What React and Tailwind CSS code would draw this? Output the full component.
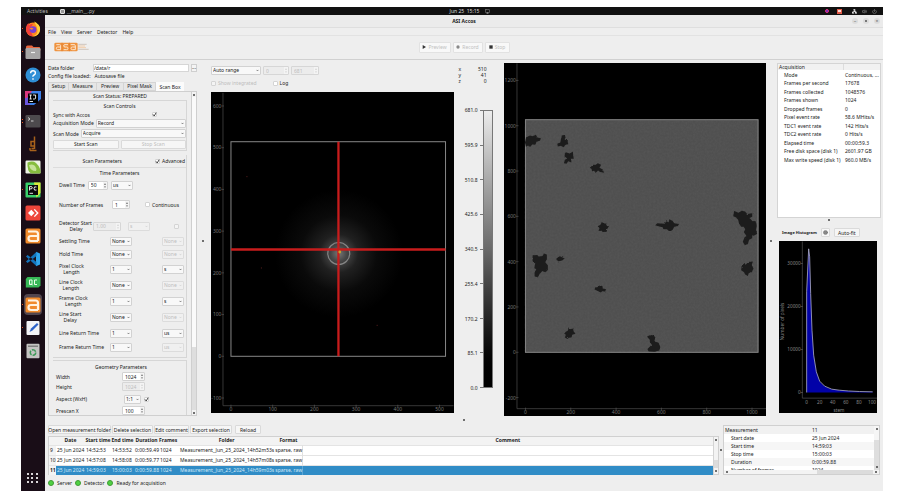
import { ChevronDown, Circle, Monitor, Network, Power, Volume2 } from "lucide-react";

const PIXEL_ROWS = [
  { label: ["Settling Time"], value: "None", unit: "None", off: true, h: "h-3" },
  { label: ["Hold Time"], value: "None", unit: "None", off: true, h: "h-[14px]" },
  { label: ["Pixel Clock", "Length"], value: "1", unit: "s", h: "h-4" },
  { label: ["Line Clock", "Length"], value: "None", unit: "None", off: true, h: "h-4" },
  { label: ["Frame Clock", "Length"], value: "1", unit: "s", h: "h-4" },
  { label: ["Line Start", "Delay"], value: "None", unit: "None", off: true, h: "h-4" },
  { label: ["Line Return Time"], value: "1", unit: "us", h: "h-4" },
  { label: ["Frame Return Time"], value: "1", unit: "us", off: true, h: "h-3" },
];

const ACQUISITION = [
  ["Mode", "Continuous, ..."],
  ["Frames per second", "17678"],
  ["Frames collected", "1048576"],
  ["Frames shown", "1024"],
  ["Dropped frames", "0"],
  ["Pixel event rate", "58.6 MHits/s"],
  ["TDC1 event rate", "142 Hits/s"],
  ["TDC2 event rate", "0 Hits/s"],
  ["Elapsed time", "00:00:59.3"],
  ["Free disk space (disk 1)", "2601.97 GB"],
  ["Max write speed (disk 1)", "960.0 MB/s"],
];

const MEASUREMENT = [
  ["Start date", "25 Jun 2024"],
  ["Start time", "14:59:03"],
  ["Stop time", "15:00:03"],
  ["Duration", "0:00:59.88"],
  ["Number of frames", "1024"],
];

const RUNS = [
  ["9", "25 Jun 2024", "14:52:53", "14:53:52", "0:00:59.49", "1024", "Measurement_Jun_25_2024_14h52m53s", "sparse, raw"],
  ["10", "25 Jun 2024", "14:57:08", "14:58:08", "0:00:59.77", "1024", "Measurement_Jun_25_2024_14h57m08s", "sparse, raw"],
  ["11", "25 Jun 2024", "14:59:03", "15:00:03", "0:00:59.88", "1024", "Measurement_Jun_25_2024_14h59m03s", "sparse, raw"],
];

function Select({ label, value, off, className = "" }) {
  return (
    <span className={`relative block h-[9px] shrink-0 ${className}`}>
      <select
        aria-label={label}
        disabled={off}
        className="block h-full w-full appearance-none rounded-[1px] border border-[#d2d2d2] bg-[#f8f8f8] pl-[1px] leading-[7px] text-[#222] disabled:border-[#dcdcdc] disabled:bg-[#f0f0f0] disabled:text-[#bdbdbd] disabled:opacity-100"
      >
        <option>{value}</option>
      </select>
      <ChevronDown className={`pointer-events-none absolute top-[3px] right-[2px] h-[3px] w-[3px] ${off ? "text-[#ccc]" : "text-[#444]"}`} strokeWidth={5} />
    </span>
  );
}

function Spin({ label, value, off, className = "" }) {
  return (
    <span className={`flex h-[9px] shrink-0 rounded-[1px] border ${off ? "border-[#d6d6d6] bg-[#ececec]" : "border-[#d2d2d2] bg-white"} ${className}`}>
      <input
        aria-label={label}
        disabled={off}
        defaultValue={value}
        className="h-full w-full min-w-0 bg-transparent pl-[2px] leading-[7px] text-[#222] disabled:text-[#bdbdbd]"
      />
      <svg viewBox="0 0 4 8" className={`h-full w-1 shrink-0 bg-[#f4f4f4] ${off ? "fill-[#ccc]" : "fill-[#555]"}`}>
        <path d="M.8 3 2 1.300 3.200 3zM.8 5 2 6.700 3.200 5z" />
      </svg>
    </span>
  );
}

function Check({ label, checked, off, hideLabel }) {
  return (
    <label className={`flex items-center gap-[2px] ${off ? "text-[#bdbdbd]" : ""}`}>
      <span className="relative block h-[5px] w-[5px]">
        <input
          type="checkbox"
          aria-label={label}
          defaultChecked={checked}
          disabled={off}
          className="block h-[5px] w-[5px] appearance-none rounded-[1px] border border-[#d4d4d4] bg-white disabled:bg-[#f4f4f4]"
        />
        {checked && (
          <svg viewBox="0 0 5 5" className="pointer-events-none absolute inset-0 h-[5px] w-[5px]">
            <path d="M1 2.400 2.200 4 4.200.6" fill="none" stroke="#333" strokeWidth=".9" />
          </svg>
        )}
      </span>
      {!hideLabel && label}
    </label>
  );
}

function Button({ children, disabled, className = "" }) {
  return (
    <button
      type="button"
      disabled={disabled}
      className={`flex h-[9px] items-center justify-center whitespace-nowrap rounded-[1px] border border-[#dadada] bg-[#f6f6f6] disabled:text-[#bdbdbd] ${className}`}
    >
      {children}
    </button>
  );
}

function Handle({ className = "" }) {
  return <span className={`block h-[2px] w-[2px] shrink-0 rounded-full bg-[#444] ${className}`} />;
}

/* ---------- dock ---------- */

function LetterA() {
  return (
    <>
      <rect x=".5" y=".5" width="15" height="15" rx="1.500" fill="#f08a2c" />
      <path d="M3 3.500h7.500q2.500 0 2.500 2.500v7M13 8H6Q3.500 8 3.500 10.500T6 13h7" fill="none" stroke="#fff3e2" strokeWidth="2.200" />
    </>
  );
}

const DOCK = [
  {
    name: "Firefox",
    dots: 1,
    art: (
      <>
        <circle cx="8" cy="8.500" r="7" fill="#ff8a1f" />
        <path d="M1 7Q1 4 3.500 2l.5 2.200Q6 2.500 8 3L5 8l3 7.500Q1.500 15 1 8z" fill="#f4403b" />
        <path d="M9 .5q4.500 2 5.800 5.500 1 4-1.500 7-2.500 2.500-5.300 2.500 5-2 4.500-6.500Q12 5 9 .5z" fill="#ffd23c" />
        <circle cx="8" cy="8.600" r="3.400" fill="#7a3fd0" />
        <path d="M4.500 7.500q2-1.500 4 .2l-2 1z" fill="#ff8a1f" />
      </>
    ),
  },
  {
    name: "Files",
    dots: 1,
    art: (
      <>
        <path d="M1 3q0-1.500 1.500-1.500H7L8.500 3H14q1.200 0 1.200 1.200V7H1z" fill="#e9663f" />
        <rect x=".5" y="4" width="15" height="11" rx="1.200" fill="#a7a5a6" />
        <path d="M6 8.500h4" stroke="#efefef" strokeWidth="1.200" />
      </>
    ),
  },
  {
    name: "Help",
    art: (
      <>
        <circle cx="8" cy="8" r="7.500" fill="#2f8fd6" />
        <path d="M5.600 6.200Q5.700 3.800 8 3.800t2.400 2.100Q10.400 7.300 9 8t-1 1.800M8 11.200v1.600" fill="none" stroke="#fff" strokeWidth="1.400" />
      </>
    ),
  },
  {
    name: "IntelliJ IDEA",
    art: (
      <>
        <path d="M0 1h8L3 15H0z" fill="#d9377e" />
        <path d="M7 1h9v8L9 15H0v-4z" fill="#3b7fe8" />
        <path d="M0 8h5v7H0z" fill="#6b56dd" />
        <rect x="3" y="3.500" width="10" height="9.500" fill="#000" />
        <path d="M4.500 5h2.200M5.600 5v4M4.500 9h2.200M8 5h2.600v3q0 1-1.200 1H8M4.500 11.500H8" fill="none" stroke="#fff" strokeWidth=".9" />
      </>
    ),
  },
  {
    name: "Terminal",
    dots: 2,
    art: (
      <>
        <rect x=".5" y="2" width="15" height="12.500" rx="1.300" fill="#4d4a4d" />
        <path d="M3 4.500 5 6 3 7.500M6 8h2.500" fill="none" stroke="#ddd" strokeWidth=".9" />
      </>
    ),
  },
  {
    name: "Microscope",
    art: (
      <path d="M9.500.5V13M9.500 5.500H6v4.500h3.500M5 14.500h6.500M5 12v2.500M6.500 12.500H9" fill="none" stroke="#a8621c" strokeWidth="1.500" />
    ),
  },
  {
    name: "Settings",
    art: (
      <>
        <rect x=".5" y="1.500" width="15" height="13" rx="1.200" fill="#eef3e6" />
        <path d="M2.500 3.500Q8 1.500 11 4t4.500 7v3.500H6Q2 12 2.500 3.500z" fill="#86bd3f" />
        <path d="M4 6q4-1.500 6 1t1 5q-6 0-7-6z" fill="#c7e39a" />
      </>
    ),
  },
  {
    name: "PyCharm",
    dots: 1,
    art: (
      <>
        <rect x=".5" y=".5" width="15" height="15" rx="1" fill="#39cf6b" />
        <path d="M9 .5h6.500V11l-4 4.500z" fill="#d9ea3b" />
        <rect x="3" y="3" width="10" height="10" fill="#0b0b0b" />
        <path d="M4.500 8.500V4.600H6q1.300 0 1.300 1.100T6 6.900H4.500M11.500 5q-2.500-1-2.500 1.500t2.500 1.500M4.500 11.300H8" fill="none" stroke="#fff" strokeWidth=".9" />
      </>
    ),
  },
  {
    name: "AnyDesk",
    art: (
      <>
        <rect x=".5" y=".5" width="15" height="15" rx="1.500" fill="#ee463b" />
        <path d="M6.300 4.800 9.500 8l-3.200 3.200L3 8z" fill="#fff" />
        <path d="m8.800 4.800 1-.8L13.700 8l-3.900 4-1-.8L11.800 8z" fill="#fff" />
      </>
    ),
  },
  { name: "Accos", art: <LetterA /> },
  {
    name: "Visual Studio Code",
    art: (
      <>
        <path d="M11 .8 15 2.600v10.800L11 15.200z" fill="#2ea3ea" />
        <path d="M11.300 1 1 10.500l1.600 1.500L11.500 5M11.300 15 1 5.500 2.600 4l8.900 7" fill="#1374bd" />
      </>
    ),
  },
  {
    name: "Qt Creator",
    art: (
      <>
        <path d="M2.500 3h13v8.500l-2 2H.8V5z" fill="#37b857" />
        <path d="M7 6H4.500v4.500H7V6M6 9.500l1.500 1.800M12 6H9.500v4.500H12" fill="none" stroke="#e7ffe9" strokeWidth="1" />
      </>
    ),
  },
  { name: "Accos session", dots: 1, active: true, art: <LetterA /> },
  {
    name: "Text Editor",
    dots: 1,
    art: (
      <>
        <rect x="1.500" y="1" width="13" height="14" rx="1" fill="#f2f3f6" />
        <path d="M4.500 12 6 8.500l6-5.500 1.500 1.500-6 6z" fill="#2c62c8" />
      </>
    ),
  },
  {
    name: "Trash",
    art: (
      <>
        <rect x="1.500" y=".8" width="13" height="14.500" rx="1" fill="#c4c3c2" />
        <path d="M3 3.200h10" stroke="#6f6f6f" strokeWidth="1.200" />
        <circle cx="8" cy="9.500" r="2.700" fill="none" stroke="#3b9a57" strokeWidth="1.500" strokeDasharray="4.500 1.150" />
      </>
    ),
  },
];

function Dock() {
  return (
    <nav className="flex w-6 shrink-0 flex-col bg-[#190d17] pt-[2px]">
      {DOCK.map((app) => (
        <button key={app.name} type="button" aria-label={app.name} className="flex h-[23px] w-full items-center">
          <span className="flex w-[3px] flex-col items-center gap-[2px]">
            {Array.from({ length: app.dots || 0 }, (_, i) => (
              <span key={i} className="h-[1px] w-[1px] bg-[#e95420]" />
            ))}
          </span>
          <span className={`flex h-[21px] w-[18px] items-center justify-center rounded-sm ${app.active ? "bg-[#52464f]" : ""}`}>
            <svg viewBox="0 0 16 16" className="h-4 w-4">{app.art}</svg>
          </span>
        </button>
      ))}
      <button type="button" aria-label="Show applications" className="mt-auto mb-2 ml-[6px] grid w-[11px] grid-cols-3 gap-[2px]">
        {Array.from({ length: 9 }, (_, i) => (
          <span key={i} className="h-[2px] w-[2px] bg-[#d8d4d7]" />
        ))}
      </button>
    </nav>
  );
}

/* ---------- left panel ---------- */

function ParamLabel({ lines }) {
  return (
    <span className="w-[51px] shrink-0">
      <span className="inline-block text-center leading-[6px]">
        {lines.map((line) => (
          <span key={line} className="block whitespace-nowrap">{line}</span>
        ))}
      </span>
    </span>
  );
}

function ScanBox() {
  return (
    <div className="flex min-h-0 flex-1 border border-[#cfcfcf]">
      <div className="flex min-w-0 flex-1 flex-col overflow-hidden pr-1 pl-1">
        <p className="h-2 shrink-0 text-center leading-[8px]">Scan Status: PREPARED</p>

        <section className="shrink-0 border-t border-r border-b border-[#d6d6d6] pt-[1px] pb-[1px]">
          <h2 className="h-[9px] text-center leading-[9px]">Scan Controls</h2>
          <div className="flex h-[7px] items-center">
            <span className="w-[99px]">Sync with Accos</span>
            <Check label="Sync with Accos" checked hideLabel />
          </div>
          <div className="flex h-[10px] items-center gap-[2px]">
            <span>Acquisition Mode</span>
            <Select label="Acquisition Mode" value="Record" className="min-w-0 flex-auto" />
          </div>
          <div className="flex h-[11px] items-center gap-[2px]">
            <span>Scan Mode</span>
            <Select label="Scan Mode" value="Acquire" className="min-w-0 flex-auto" />
          </div>
          <div className="flex h-[10px] items-center gap-[2px]">
            <Button className="flex-1">Start Scan</Button>
            <Button className="flex-1" disabled>Stop Scan</Button>
          </div>
        </section>

        <section className="mt-1 shrink-0 border-r border-b border-[#d6d6d6] pb-1">
          <div className="flex h-3 items-center justify-end gap-[33px] pr-[1px]">
            <h2>Scan Parameters</h2>
            <Check label="Advanced" checked />
          </div>
          <div className="border-t border-[#dcdcdc] pl-[6px]">
            <h3 className="h-[10px] pr-[6px] text-center leading-[10px]">Time Parameters</h3>
            <div className="flex h-[14px] items-center gap-[3px]">
              <span>Dwell Time</span>
              <Spin label="Dwell Time" value="50" className="w-5" />
              <Select label="Dwell Time unit" value="us" className="w-[22px]" />
            </div>
            <div className="flex h-[25px] items-center">
              <span className="w-[53px] shrink-0">Number of Frames</span>
              <Spin label="Number of Frames" value="1" className="mr-[15px] w-[18px]" />
              <Check label="Continuous" />
            </div>
            <div className="flex h-[18px] items-center">
              <span className="w-[34px] shrink-0 whitespace-nowrap leading-[6px]">
                Detector Start
                <span className="block text-center">Delay</span>
              </span>
              <Spin label="Detector Start Delay" value="1.00" off className="mr-[7px] w-7" />
              <Select label="Detector Start Delay unit" value="s" off className="mr-6 w-[22px]" />
              <Check label="Enable detector start delay" hideLabel off />
            </div>
            {PIXEL_ROWS.map((row) => (
              <div key={row.label[0]} className={`flex items-center pr-[2px] ${row.h}`}>
                <ParamLabel lines={row.label} />
                <Select label={row.label.join(" ")} value={row.value} className="w-[22px]" />
                <Select label={`${row.label.join(" ")} unit`} value={row.unit} off={row.off} className="ml-auto w-[22px]" />
              </div>
            ))}
          </div>
        </section>

        <section className="mt-[2px] shrink-0 border-t border-r border-[#d6d6d6] pt-[1px] pl-[3px]">
          <h2 className="h-[10px] text-center leading-[10px]">Geometry Parameters</h2>
          <div className="flex h-[9px] items-center">
            <span className="w-[66px]">Width</span>
            <Spin label="Width" value="1024" className="w-[23px]" />
          </div>
          <div className="flex h-[11px] items-center">
            <span className="w-[66px]">Height</span>
            <Spin label="Height" value="1024" off className="w-[23px]" />
          </div>
          <div className="flex h-[14px] items-center">
            <span className="w-[68px]">Aspect (WxH)</span>
            <Select label="Aspect (WxH)" value="1:1" className="mr-[3px] w-[17px]" />
            <Check label="Lock aspect" checked hideLabel />
          </div>
          <div className="flex h-[9px] items-center">
            <span className="w-[66px]">Prescan X</span>
            <Spin label="Prescan X" value="100" className="w-[23px]" />
          </div>
        </section>
      </div>
      <div className="flex w-[5px] flex-col items-center border-l border-[#cfcfcf] bg-[#dedede]">
        <span className="flex h-[5px] w-full items-center justify-center bg-[#f3f3f3]"><Handle className="h-[1px] w-[1px]" /></span>
        <span className="h-[250px] w-full bg-[#fafafa]" />
        <span className="mt-auto flex h-[5px] w-full items-center justify-center bg-[#f3f3f3]"><Handle className="h-[1px] w-[1px]" /></span>
      </div>
    </div>
  );
}

function LeftPanel() {
  return (
    <div className="flex min-h-0 w-[149px] shrink-0 flex-col pb-[3px]">
      <label className="flex h-[9px] items-center">
        <span className="w-[45px] shrink-0">Data folder</span>
        <input defaultValue="/data/r" className="h-2 min-w-0 flex-1 border border-[#d6d6d6] bg-white leading-[6px]" />
        <button type="button" className="ml-[2px] h-2 w-[6px] border border-[#cfcfcf] bg-[#f4f4f4] leading-[5px]">...</button>
      </label>
      <p className="h-2 leading-[9px]">
        Config file loaded:<span className="ml-1">Autosave file</span>
      </p>
      <div role="tablist" className="mt-[2px] flex h-[9px]">
        <button type="button" role="tab" className="w-[21px] border border-[#d4d4d4] bg-[#e6e6e6] leading-[7px]">Setup</button>
        <button type="button" role="tab" className="w-7 border border-l-0 border-[#d4d4d4] bg-[#e6e6e6] leading-[7px]">Measure</button>
        <button type="button" role="tab" className="w-[27px] border border-l-0 border-[#d4d4d4] bg-[#e6e6e6] leading-[7px]">Preview</button>
        <button type="button" role="tab" className="w-8 border border-l-0 border-[#d4d4d4] bg-[#e6e6e6] leading-[7px]">Pixel Mask</button>
        <button type="button" role="tab" aria-selected="true" className="w-7 bg-[#fbfbfb] leading-[8px]">Scan Box</button>
      </div>
      <ScanBox />
    </div>
  );
}

/* ---------- plots ---------- */

function DiffractionPlot() {
  const yTicks = [600, 500, 400, 300, 200, 100, 0, -100];
  const xTicks = [0, 100, 200, 300, 400, 500];
  return (
    <svg viewBox="0 0 243 320" className="min-h-0 w-full flex-1 bg-black text-[5px]">
      <defs>
        <radialGradient id="glow">
          <stop offset="0" stopColor="#777" />
          <stop offset=".12" stopColor="#484848" />
          <stop offset=".3" stopColor="#202020" />
          <stop offset=".6" stopColor="#0a0a0a" />
          <stop offset="1" stopColor="#000" />
        </radialGradient>
      </defs>
      <circle cx="128" cy="161" r="64" fill="url(#glow)" />
      <path d="M12 0v313.500H243" fill="none" stroke="#444" strokeWidth=".8" />
      <g fill="#777" stroke="none">
        {yTicks.map((t) => (
          <text key={t} x="10.500" y={265.8 - t * 0.418} textAnchor="end">{t}</text>
        ))}
        {xTicks.map((t) => (
          <text key={t} x={20 + t * 0.418} y="318.500" textAnchor="middle">{t}</text>
        ))}
      </g>
      <g stroke="#555" strokeWidth=".7">
        {yTicks.map((t) => (
          <path key={t} d={`M10.500 ${264 - t * 0.418}h2.500`} />
        ))}
        {xTicks.map((t) => (
          <path key={t} d={`M${20 + t * 0.418} 312.500v2.500`} />
        ))}
      </g>
      <rect x="20" y="49" width="215" height="215" fill="none" stroke="#888" />
      <circle cx="128" cy="161" r="11" fill="none" stroke="#858585" strokeWidth="1.200" />
      <path d="M127.700 49v215M20 157h215" stroke="#c81c1c" strokeWidth="2.300" />
      <circle cx="129" cy="159.500" r="1.400" fill="#c9a227" />
      <path d="M35.500 84h1M50 175.500h1M166 233h1" stroke="#5a2020" />
    </svg>
  );
}

/* dark particles, drawn on a grid three times finer than the plot */
const PARTICLES = [
  "M104 172l12-6 8 2 10-4 4 8 11 2-3 8-10 3-4 9-9-1-6 7-8-3-5 3-3-12z",
  "M212 166l9-2 2 8-3 6 9 2 2 12-8 2-6 7-8-4-9 2-2-8 9-4z",
  "M224 216l12 4 9-6 1 12 2 10-9 0 2 11-10-4-5 8-8-2 3-10 7-4-8-6 1-9z",
  "M306 254l8 0 6-5 10 5-5 9 9 4 5 11-12-2-6-5-8 7-4-6-6 1-2-7-5-3z",
  "M332 426l6 4 8 1 1 7 7 1-6 8-1 8-12 1-4-4-9 1 3-8-5-6 8-5z",
  "M499 430l22 1 5-7 7 3 2-9 9 4 6 8 14 2-3 6-11 2-5 9-9 6-8-7-11 0-2-6-16-4-6-2z",
  "M730 393l13 5 10-6 10 2 6 8 15-2 0 10-8 4 9 10 9-1 4 14-3 12 4 12-10 6-5-1 0 9-9 4-4 13-9 4-6-11 5-13 6-4-8-11 4-9-4-8-8 0-6-9-3-11-7-8-8-3z",
  "M124 526l14-1 4 5 12-2 4-7 9 3 0 14-5 9 8 9 0 14-8 7-9-4-8 9-5 10-10-2 0-12 5-10-6-3 3-16-8-6z",
  "M196 535l10-6 8 4 6 3-7 6-11 2-6-4z",
  "M312 623l11-2 3-5 8 3 1 7 10 2-3 7-9-1-4 4-12-6-7-3z",
  "M232 742l5 6 9-2 1 8 6 8-10 3-2 8-8 1-5 4-7-5 3-8-5-4 6-6 5-2z",
  "M468 771q8-8 20-4l6 8-4 7 4 5 8 1 6 13-3 11-14 4-18-1-4-7 9-9 5-3-6-8-1-8z",
  "M755 552l10 2 7-8 14-1-3 10 5 11-5 11-9 2-3 9-8-4-4-8-8-5 1-11z",
];

function MicrographPlot() {
  const yTicks = [1200, 1000, 800, 600, 400, 200, 0, -200];
  const xTicks = [0, 200, 400, 600, 800, 1000];
  return (
    <svg viewBox="0 0 263 353" className="h-full w-full bg-black text-[5px]">
      <defs>
        <filter id="rough" x="-20%" y="-20%" width="140%" height="140%">
          <feTurbulence type="fractalNoise" baseFrequency=".12" numOctaves="2" seed="4" />
          <feDisplacementMap in="SourceGraphic" scale="6" xChannelSelector="R" yChannelSelector="G" />
          <feGaussianBlur stdDeviation="1.500" />
        </filter>
        <filter id="grain" x="0" y="0" width="100%" height="100%">
          <feTurbulence type="fractalNoise" baseFrequency=".5" numOctaves="2" seed="8" />
          <feColorMatrix values="0 0 0 0 .5  0 0 0 0 .5  0 0 0 0 .5  .5 0 0 0 -.12" />
        </filter>
      </defs>
      <path d="M13 0v346H263" fill="none" stroke="#444" strokeWidth=".8" />
      <g fill="#777">
        {yTicks.map((t) => (
          <text key={t} x="12" y={291.5 - t * 0.227} textAnchor="end">{t}</text>
        ))}
        {xTicks.map((t) => (
          <text key={t} x={21.5 + t * 0.227} y="351.500" textAnchor="middle">{t}</text>
        ))}
      </g>
      <g stroke="#555" strokeWidth=".7">
        {yTicks.map((t) => (
          <path key={t} d={`M12 ${289.5 - t * 0.227}h2.500`} />
        ))}
        {xTicks.map((t) => (
          <path key={t} d={`M${21.5 + t * 0.227} 345v2.500`} />
        ))}
      </g>
      <rect x="21" y="56" width="234" height="234" fill="#4f4f4f" />
      <rect x="21" y="56" width="234" height="234" filter="url(#grain)" opacity=".18" />
      <rect x="21.500" y="56.500" width="233" height="233" fill="none" stroke="#858585" strokeWidth=".9" />
      <g transform="translate(-12.667 17) scale(.3333)" fill="#1c1c1c" filter="url(#rough)">
        {PARTICLES.map((d) => (
          <path key={d} d={d} />
        ))}
      </g>
    </svg>
  );
}

function ColorBar() {
  const labels = ["681.0", "595.9", "510.8", "425.6", "340.5", "255.4", "170.2", "85.1", "0.0"];
  return (
    <div className="flex w-[50px] shrink-0 flex-col">
      <table className="mt-[3px] ml-[5px] w-7 leading-[6px]">
        <tbody>
          {[["x", "510"], ["y", "41"], ["z", "0"]].map(([k, v]) => (
            <tr key={k}>
              <th className="p-0 text-left font-normal">{k}</th>
              <td className="p-0 text-right">{v}</td>
            </tr>
          ))}
        </tbody>
      </table>
      <div className="mt-[26px] mb-[31px] flex min-h-0 flex-1 gap-[2px] pl-[8px]">
        <div className="flex w-4 flex-col justify-between text-right">
          {labels.map((l) => (
            <span key={l} className="-my-[3px] h-[6px] leading-[6px]">{l}</span>
          ))}
        </div>
        <div className="flex w-[3px] flex-col justify-between">
          {labels.map((l) => (
            <span key={l} className="h-[1px] bg-[#777]" />
          ))}
        </div>
        <div className="-ml-[2px] w-[10px] border border-[#777] bg-linear-to-b from-[#ececec] via-[#6a6a6a] to-black" />
      </div>
    </div>
  );
}

function Histogram() {
  return (
    <svg viewBox="0 0 98 171" className="min-h-0 w-full flex-1 bg-black">
      <g transform="scale(.3333) translate(-56 -94)">
        <path d="M126 94v470M126 564H351" stroke="#555" strokeWidth="2" />
        <path d="M139 547V245L145 116l3 24 3 110 4 110 5 75 8 50 10 28q12 18 36 24 40 7 123 8v2z" fill="#0202a8" />
        <path d="M139 547V245L145 116l3 24 3 110 4 110 5 75 8 50 10 28q12 18 36 24 40 7 123 8" fill="none" stroke="#a9a9c4" strokeWidth="2.500" />
        <g fill="#888" fontSize="14">
          {[[0, 547], [10000, 418], [20000, 289], [30000, 160]].map(([t, y]) => (
            <g key={t}>
              <text x="121" y={y + 5} textAnchor="end">{t}</text>
              <path d={`M121 ${y}h6`} stroke="#666" strokeWidth="2" />
            </g>
          ))}
          {[0, 20, 40, 60, 80, 100].map((t) => (
            <text key={t} x={139 + t * 1.96} y="583" textAnchor="middle">{t}</text>
          ))}
          <text x="236" y="605" textAnchor="middle">stem</text>
          <text transform="translate(71 334) rotate(-90)" textAnchor="middle">Number of pixels</text>
        </g>
      </g>
    </svg>
  );
}

function Aside() {
  return (
    <aside className="flex w-[104px] shrink-0 flex-col">
      <div className="h-[155px] shrink-0 overflow-hidden border border-[#d4d4d4] bg-white">
        <table className="w-full table-fixed whitespace-nowrap">
          <thead>
            <tr className="h-[6px] bg-[#f1f1f1] leading-[6px]">
              <th className="w-[65px] border-r border-[#dcdcdc] p-0 pl-[1px] text-left font-normal">Acquisition</th>
              <th className="p-0" />
            </tr>
          </thead>
          <tbody>
            {ACQUISITION.map(([k, v]) => (
              <tr key={k} className="leading-[8px] odd:h-[9px] even:h-2">
                <td className="p-0 pl-[6px]">{k}</td>
                <td className="p-0 pl-[2px]">{v}</td>
              </tr>
            ))}
          </tbody>
        </table>
      </div>
      <Handle className="mx-auto mt-[1px]" />
      <div className="mt-[7px] mb-1 flex h-[9px] shrink-0 items-center gap-1 pl-[5px]">
        <h2 className="text-[4px] font-bold">Image Histogram</h2>
        <button type="button" aria-label="Histogram settings" className="flex h-[9px] w-[9px] items-center justify-center rounded-[1px] border border-[#dadada] bg-[#f6f6f6]">
          <Circle className="h-[5px] w-[5px] fill-[#888] text-[#666]" />
        </button>
        <Button className="w-[26px]">Auto-fit</Button>
      </div>
      <div className="mr-1 mb-[6px] ml-[2px] flex min-h-0 flex-1">
        <Histogram />
      </div>
    </aside>
  );
}

/* ---------- bottom ---------- */

function RunsTable() {
  return (
    <div className="flex min-h-0 flex-1 border border-[#d0d0d0] bg-white">
      <table className="min-w-0 flex-1 table-fixed whitespace-nowrap">
        <thead>
          <tr className="h-2 bg-[#f3f3f3] leading-[7px]">
            <th className="w-[7px] p-0" />
            <th className="w-[29px] p-0">Date</th>
            <th className="w-[26px] p-0">Start time</th>
            <th className="w-[23px] p-0">End time</th>
            <th className="w-[25px] p-0">Duration</th>
            <th className="w-5 p-0 text-left">Frames</th>
            <th className="w-[95px] p-0">Folder</th>
            <th className="w-7 p-0">Format</th>
            <th className="p-0">Comment</th>
          </tr>
        </thead>
        <tbody>
          {RUNS.map((row, i) => {
            const selected = i === RUNS.length - 1;
            return (
              <tr key={row[0]} className={`h-[10px] border-t border-[#e4e4e4] leading-[9px] ${selected ? "bg-[#308cc6] text-[#d3e9f7]" : ""}`}>
                {row.map((cell, c) => (
                  <td
                    key={c}
                    className={`p-0 pl-[1px] ${c === 0 && selected ? "bg-[#f3f3f3] font-bold text-[#222]" : ""} ${c === 0 && !selected ? "bg-[#f3f3f3]" : ""}`}
                  >
                    {cell}
                  </td>
                ))}
                <td className={`border-l p-0 ${selected ? "border-[#5aa6d6]" : "border-[#e0e0e0]"}`} />
              </tr>
            );
          })}
        </tbody>
      </table>
      <div className="flex w-[5px] flex-col items-center justify-between border-l border-[#d4d4d4] bg-[#f3f3f3] py-[2px]">
        <Handle className="h-[1px] w-[1px]" />
        <span className="mt-auto mb-[2px] h-2 w-full bg-[#dcdcdc]" />
        <Handle className="h-[1px] w-[1px]" />
      </div>
    </div>
  );
}

function MeasurementInfo() {
  return (
    <div className="mr-[3px] flex w-[157px] shrink-0 flex-col border border-[#d0d0d0] bg-white">
      <div className="flex min-h-0 flex-1">
        <div className="min-w-0 flex-1 overflow-hidden">
          <table className="w-full table-fixed whitespace-nowrap">
            <thead>
              <tr className="h-2 bg-[#f1f1f1] leading-[8px]">
                <th className="w-[88px] p-0 pl-[1px] text-left font-normal">Measurement</th>
                <th className="p-0 text-left font-normal">11</th>
              </tr>
            </thead>
            <tbody>
              {MEASUREMENT.map(([k, v]) => (
                <tr key={k} className="h-2 leading-[8px] even:bg-[#f6f6f6]">
                  <td className="p-0 pl-[7px]">{k}</td>
                  <td className="p-0">{v}</td>
                </tr>
              ))}
            </tbody>
          </table>
        </div>
        <div className="flex w-[5px] flex-col items-center justify-between bg-[#dedede]">
          <span className="flex h-[14px] w-full justify-center bg-[#f6f6f6] pt-[2px]"><Handle className="h-[1px] w-[1px]" /></span>
          <Handle className="mb-[2px] h-[1px] w-[1px]" />
        </div>
      </div>
      <div className="flex h-1 shrink-0 items-center justify-between bg-[#f3f3f3] px-[2px]">
        <Handle className="h-[1px] w-[1px]" />
        <span className="mr-[2px] ml-auto h-full w-14 bg-[#dcdcdc]" />
        <Handle className="h-[1px] w-[1px]" />
      </div>
    </div>
  );
}

/* ---------- window chrome ---------- */

function TopBar() {
  return (
    <header className="flex h-2 shrink-0 items-center bg-[#111] text-[#bbb]">
      <div className="flex flex-1 items-center pl-[6px]">
        <span>Activities</span>
        <span className="mr-[2px] ml-3 h-[5px] w-[5px] rounded-[1px] border border-[#ddd] bg-[#999]" />
        <span>__main__.py</span>
      </div>
      <div className="flex items-center gap-[6px] pl-9">
        <span className="text-[#ddd]">Jun 25&nbsp; 15:15</span>
        <Monitor className="h-[5px] w-[5px]" />
      </div>
      <div className="flex flex-1 items-center justify-end gap-[5px] pr-[6px]">
        <span className="h-1 w-1 rounded-full border border-[#e0307a] bg-[#5a2ad0]" />
        <span className="mx-[3px] flex h-[5px] w-[5px] items-center justify-center bg-[#e25a48]"><span className="h-[2px] w-[3px] bg-[#fbd9d4]" /></span>
        <Network className="ml-[2px] h-[5px] w-[5px] text-white" strokeWidth={3} />
        <Volume2 className="h-[5px] w-[5px]" />
        <Power className="h-[5px] w-[5px]" />
      </div>
    </header>
  );
}

function Toolbar() {
  return (
    <div className="flex h-6 shrink-0 items-center border-b border-[#d0d0d0] pb-[1px]">
      <div className="flex-1 pl-[9px]">
        <svg viewBox="0 0 105 30" className="h-[10px] w-[35px]" aria-label="ASI">
          <rect x="1" y="2" width="70" height="26" rx="4" fill="#ef9340" />
          <g fill="none" stroke="#fde6cd" strokeWidth="3">
            <path d="M7 8h10q3 0 3 3v12M20 15h-9q-4 0-4 4t4 4h9" />
            <path d="M42 8h-9q-4 0-4 3.500t4 3.500h5q4 0 4 4t-4 4h-9" />
            <path d="M50 8h10q4 0 4 3v12M64 15h-9q-4 0-4 4t4 4h9" />
          </g>
          <path d="M24 2v26M46 2v26" stroke="#d9701e" strokeWidth="1.500" />
          <path d="M73 7h25M73 22h31" stroke="#c9bdb2" strokeWidth="2.500" />
          <path d="M73 12h20M73 17h23" stroke="#f2c79d" strokeWidth="2.500" />
        </svg>
      </div>
      <div className="flex gap-[2px]">
        {[
          ["Preview", "M1 0 6 3 1 6z", "w-8"],
          ["Record", "M3 .5a2.500 2.500 0 100 5 2.500 2.500 0 000-5z", "w-[30px]"],
          ["Stop", "M.5.5h5v5h-5z", "w-[25px]"],
        ].map(([label, d, width]) => (
          <button key={label} type="button" disabled className={`flex h-[11px] items-center justify-center gap-[2px] rounded-[1px] border border-[#e2e2e2] bg-[#f8f8f8] text-[#c0c0c0] ${width}`}>
            <svg viewBox="0 0 6 6" className="h-1 w-1"><path d={d} fill={label === "Record" ? "#888" : "#333"} /></svg>
            {label}
          </button>
        ))}
      </div>
      <div className="flex-1 pr-[9px]" />
    </div>
  );
}

export default function App() {
  return (
    <div className="h-screen bg-white pt-[7px] pr-6 pb-[10px] pl-[21px] font-['Noto_Sans','Open_Sans',sans-serif] text-[5px] leading-[6px] text-[#222]">
      <div className="flex h-full flex-col">
        <TopBar />
        <div className="flex min-h-0 flex-1">
          <Dock />
          <main className="flex min-w-0 flex-1 flex-col bg-[#eeeeee]">
            <div className="flex h-[13px] shrink-0 items-center border-b border-[#dedede] bg-[#ebebeb]">
              <span className="flex-1 pl-[3px]" />
              <h1 className="font-bold">ASI Accos</h1>
              <div className="flex flex-1 justify-end gap-[5px] pr-[3px] text-[#666]">
                <button type="button" aria-label="Minimize" className="h-[6px] w-[6px] rounded-full bg-[#dcdcdc] leading-[6px]">–</button>
                <button type="button" aria-label="Restore" className="flex h-[6px] w-[6px] items-center justify-center rounded-full bg-[#dcdcdc]"><span className="h-[2px] w-[2px] bg-[#777]" /></button>
                <button type="button" aria-label="Close" className="h-[6px] w-[6px] rounded-full bg-[#dcdcdc] leading-[6px]">×</button>
              </div>
            </div>
            <nav className="flex h-2 shrink-0 items-center gap-[5px] border-b border-[#e2e2e2] pl-[3px]">
              {["File", "View", "Server", "Detector", "Help"].map((m) => (
                <button key={m} type="button">{m}</button>
              ))}
            </nav>
            <Toolbar />

            <div className="flex min-h-0 flex-1 pt-[3px] pl-[3px]">
              <LeftPanel />
              <Handle className="mr-[7px] ml-[5px] self-center" />
              <div className="flex min-w-0 flex-[243] flex-col pb-[6px]">
                <div className="mt-[3px] flex h-[9px] shrink-0 items-center gap-[2px]">
                  <Select label="Range" value="Auto range" className="w-[50px]" />
                  <Spin label="Range minimum" value="0" off className="w-[26px]" />
                  <Spin label="Range maximum" value="681" off className="w-7" />
                </div>
                <div className="mt-1 mb-[5px] flex h-2 shrink-0 items-center gap-4">
                  <Check label="Show integrated" off />
                  <Check label="Log" />
                </div>
                <DiffractionPlot />
              </div>
              <ColorBar />
              <div className="min-w-0 flex-[263] pb-[3px]">
                <MicrographPlot />
              </div>
              <Handle className="mr-[5px] ml-1 self-center" />
              <Aside />
              <span className="w-[2px]" />
            </div>

            <Handle className="mx-auto" />
            <div className="flex h-[54px] shrink-0 pt-1 pl-[3px]">
              <div className="flex min-w-0 flex-1 flex-col">
                <div className="mb-[2px] flex gap-[1px]">
                  <Button className="w-[63px]">Open measurement folder</Button>
                  <Button className="w-[41px]">Delete selection</Button>
                  <Button className="w-[35px]">Edit comment</Button>
                  <Button className="w-[42px]">Export selection</Button>
                  <Button className="ml-[2px] w-[26px]">Reload</Button>
                </div>
                <RunsTable />
              </div>
              <Handle className="mx-[1px] self-center" />
              <MeasurementInfo />
            </div>

            <footer className="flex h-4 shrink-0 items-center gap-[3px] pl-[3px]">
              {["Server", "Detector", "Ready for acquisition"].map((s) => (
                <span key={s} className="flex items-center gap-[3px]">
                  <span className="h-[6px] w-[6px] rounded-full border border-[#3f9a35] bg-[#4fd142]" />
                  {s}
                </span>
              ))}
            </footer>
          </main>
        </div>
      </div>
    </div>
  );
}
